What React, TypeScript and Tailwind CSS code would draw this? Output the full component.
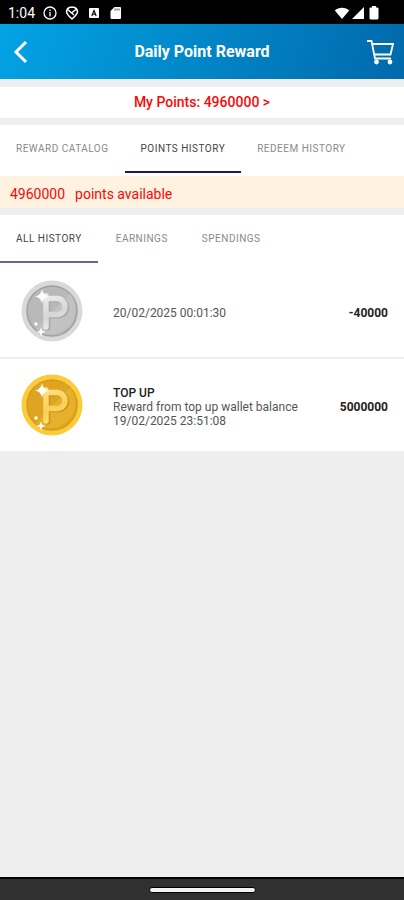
import { useState } from "react";

type Entry = {
  id: number;
  title?: string;
  note?: string;
  date: string;
  amount: string;
  kind: "spend" | "earn";
};

const mainTabs = ["REWARD CATALOG", "POINTS HISTORY", "REDEEM HISTORY"];
const filterTabs = ["ALL HISTORY", "EARNINGS", "SPENDINGS"];

const entries: Entry[] = [
  { id: 1, date: "20/02/2025 00:01:30", amount: "-40000", kind: "spend" },
  {
    id: 2,
    title: "TOP UP",
    note: "Reward from top up wallet balance",
    date: "19/02/2025 23:51:08",
    amount: "5000000",
    kind: "earn",
  },
];

const coinColors = {
  spend: { rim: "#d9d9d9", edge: "#a0a0a0", face: "#b9b9b9", shade: "#c2c2c2", shadow: "#a8a8a8", from: "#efefef", to: "#d6d6d6" },
  earn: { rim: "#fbcb3a", edge: "#d39c1c", face: "#dfa522", shade: "#e6b02c", shadow: "#cd9418", from: "#ffe48a", to: "#f9cf55" },
};

function Coin({ kind }: { kind: "spend" | "earn" }) {
  const c = coinColors[kind];
  const letter = "M25 18.500h11a8 8 0 0 1 0 16H25M25 16v31";
  return (
    <svg viewBox="0 0 62 62" className="size-[62px] shrink-0" aria-hidden="true">
      <defs>
        <linearGradient id={`p-${kind}`} gradientUnits="userSpaceOnUse" x1="24" y1="14" x2="38" y2="48">
          <stop offset="0" stopColor={c.from} />
          <stop offset="0.6" stopColor={c.to} />
          <stop offset="1" stopColor={c.from} />
        </linearGradient>
      </defs>
      <circle cx="31" cy="31" r="30.5" fill={c.rim} />
      <circle cx="31" cy="31" r="25" fill={c.face} stroke={c.edge} strokeWidth="1.5" />
      <path d="M49 13.500a25 25 0 0 1-34 36z" fill={c.shade} />
      <g fill="none" strokeWidth="5.5" strokeLinecap="round" strokeLinejoin="round">
        <path d={letter} transform="translate(1.5 1)" stroke={c.shadow} />
        <path d={letter} stroke={`url(#p-${kind})`} />
      </g>
      <path d="M21 9q1 6.500 7 7.500q-6 1-7 7q-1-6-7-7q6-1 7-7.500z" fill="#fff" />
      <circle cx="15" cy="44" r="1.700" fill="#fff" />
      <path d="M20 47.500l1.200 3.300 3.300 1.200-3.300 1.200L20 56.500l-1.200-3.300-3.300-1.200 3.300-1.200z" fill="#fff" />
    </svg>
  );
}

function StatusBar() {
  return (
    <div className="flex h-6 items-center justify-between bg-black pt-px pl-2 pr-6 text-white">
      <div className="flex items-center gap-2">
        <span className="text-sm">1:04</span>
        <svg viewBox="0 0 14 14" className="size-3.5" fill="none" stroke="currentColor" strokeWidth="1.3">
          <circle cx="7" cy="7" r="6" />
          <path d="M7 3.500v1.500M7 6v4.500" />
        </svg>
        <svg viewBox="0 0 14 14" className="size-3.5" fill="none" stroke="currentColor" strokeWidth="1.5">
          <path d="M7 13C3.500 10 1.500 8 1.500 5.500A5 5 0 0 1 5 1.300h4A5 5 0 0 1 12.500 5.500C12.500 8 10.500 10 7 13z" />
          <path d="M2.500 3.500L9 9M11.500 3L6.500 7" />
        </svg>
        <svg viewBox="0 0 14 14" className="size-3.5">
          <rect x="2" y="2" width="10" height="10" rx="1" fill="currentColor" />
          <path d="M4.800 10L7 4.500 9.200 10M5.600 8.300h2.800" fill="none" stroke="#000" strokeWidth="1.100" />
        </svg>
        <svg viewBox="0 0 14 14" className="size-3.5" fill="currentColor">
          <path d="M5.500 1H11a1 1 0 0 1 1 1v10a1 1 0 0 1-1 1H2.500a1 1 0 0 1-1-1V5z" />
          <path d="M6 2.500v2M8 2.500v2M10 2.500v2" stroke="#000" strokeWidth="0.700" />
        </svg>
      </div>
      <div className="flex items-center gap-px">
        <svg viewBox="0 0 16 14" className="h-3.5 w-4" fill="currentColor">
          <path d="M8 13L.800 4.500C4.500.800 11.500.800 15.200 4.500z" />
        </svg>
        <svg viewBox="0 0 14 14" className="size-3.5" fill="currentColor">
          <path d="M13 1v12H1z" />
        </svg>
        <svg viewBox="0 0 14 14" className="size-3.5" fill="currentColor">
          <path d="M6 0h4v1.500h1.500a1 1 0 0 1 1 1V12a1.500 1.500 0 0 1-1.500 1.500H5A1.500 1.500 0 0 1 3.500 12V2.500a1 1 0 0 1 1-1H6z" />
        </svg>
      </div>
    </div>
  );
}

function Header() {
  return (
    <header className="grid h-[55px] grid-cols-[48px_1fr_48px] items-center bg-[linear-gradient(110deg,#03a3e4,#0069ab)] text-white">
      <button type="button" aria-label="Back" className="flex h-full items-center pl-3">
        <svg viewBox="0 0 16 24" className="h-6 w-4" fill="none" stroke="currentColor" strokeWidth="3">
          <path d="M14 2L4 12l10 10" />
        </svg>
      </button>
      <h1 className="text-center text-base font-bold">Daily Point Reward</h1>
      <button type="button" aria-label="Cart" className="flex h-full items-center justify-center">
        <svg viewBox="0 0 28 26" className="h-[26px] w-7" fill="none" stroke="currentColor" strokeWidth="1.8">
          <path d="M1 2h4.500L9 19.500h16M6.500 5H27l-2.500 10.500H8.500" />
          <circle cx="10.500" cy="23" r="1.500" fill="currentColor" />
          <circle cx="24" cy="23" r="1.500" fill="currentColor" />
        </svg>
      </button>
    </header>
  );
}

type TabsProps = {
  items: string[];
  value: string;
  onChange: (v: string) => void;
  line: string;
  gap?: string;
};

function Tabs({ items, value, onChange, line, gap = "gap-0" }: TabsProps) {
  return (
    <div role="tablist" className={`flex h-12 bg-white ${gap}`}>
      {items.map((item) => (
        <button
          key={item}
          type="button"
          role="tab"
          aria-selected={item === value}
          onClick={() => onChange(item)}
          className={`border-b-2 px-4 text-[10px] tracking-wider whitespace-nowrap ${
            item === value ? `${line} text-[#444]` : "border-transparent text-[#8a8a8a]"
          }`}
        >
          {item}
        </button>
      ))}
    </div>
  );
}

function HistoryRow({ entry }: { entry: Entry }) {
  return (
    <li className="flex items-center bg-white py-[15px] pl-[21px] pr-4">
      <Coin kind={entry.kind} />
      <div className="ml-[30px] flex flex-1 items-center pt-[3px] text-xs leading-[14px]">
        <div className="flex-1 text-[#555]">
          {entry.title && <p className="font-medium text-[#222]">{entry.title}</p>}
          {entry.note && <p>{entry.note}</p>}
          <p>{entry.date}</p>
        </div>
        <span className="font-bold text-[#222]">{entry.amount}</span>
      </div>
    </li>
  );
}

export default function App() {
  const [tab, setTab] = useState("POINTS HISTORY");
  const [filter, setFilter] = useState("ALL HISTORY");

  const visible = entries.filter((e) => {
    if (filter === "EARNINGS") return e.kind === "earn";
    if (filter === "SPENDINGS") return e.kind === "spend";
    return true;
  });

  return (
    <div className="flex min-h-screen flex-col bg-[#eeeeee] font-[Roboto,sans-serif]">
      <StatusBar />
      <Header />
      <main className="flex flex-1 flex-col">
        <a href="#points" className="mt-2 bg-white text-center text-sm leading-[31px] font-medium text-[#f90808]">
          My Points: 4960000 &gt;
        </a>
        <div className="mt-[7px] bg-white pb-[3px]">
          <Tabs items={mainTabs} value={tab} onChange={setTab} line="border-[#14147a]" />
        </div>
        <p className="flex gap-2.5 bg-[#fff2e0] px-2.5 pt-1 text-sm leading-7 text-[#f90808]">
          <span>4960000</span>
          <span>points available</span>
        </p>
        <div className="mt-[7px] bg-white pb-0.5">
          <Tabs items={filterTabs} value={filter} onChange={setFilter} line="border-[#65659c]" gap="gap-0.5" />
        </div>
        <ul className="flex flex-col gap-0.5">
          {visible.map((e) => (
            <HistoryRow key={e.id} entry={e} />
          ))}
        </ul>
      </main>
      <footer className="flex h-[23px] items-center justify-center border-t-2 border-black bg-[#303030]">
        <span className="h-1.5 w-[107px] rounded-full border border-black bg-[#f2f2f2]" />
      </footer>
    </div>
  );
}
